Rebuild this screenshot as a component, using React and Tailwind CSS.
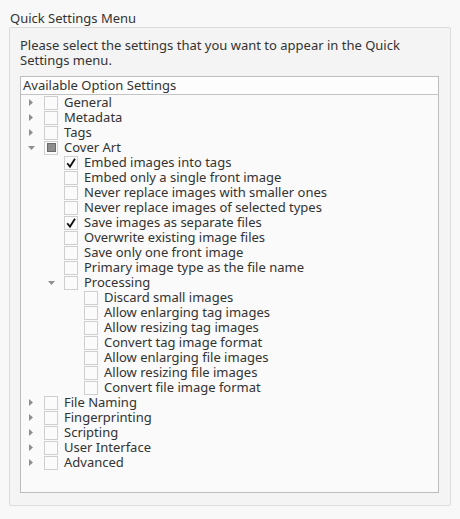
import React from "react";

const rows = [
  { l: 0, a: "r", c: 0, t: "General" },
  { l: 0, a: "r", c: 0, t: "Metadata" },
  { l: 0, a: "r", c: 0, t: "Tags" },
  { l: 0, a: "d", c: 2, t: "Cover Art" },
  { l: 1, a: "", c: 1, t: "Embed images into tags" },
  { l: 1, a: "", c: 0, t: "Embed only a single front image" },
  { l: 1, a: "", c: 0, t: "Never replace images with smaller ones" },
  { l: 1, a: "", c: 0, t: "Never replace images of selected types" },
  { l: 1, a: "", c: 1, t: "Save images as separate files" },
  { l: 1, a: "", c: 0, t: "Overwrite existing image files" },
  { l: 1, a: "", c: 0, t: "Save only one front image" },
  { l: 1, a: "", c: 0, t: "Primary image type as the file name" },
  { l: 1, a: "d", c: 0, t: "Processing" },
  { l: 2, a: "", c: 0, t: "Discard small images" },
  { l: 2, a: "", c: 0, t: "Allow enlarging tag images" },
  { l: 2, a: "", c: 0, t: "Allow resizing tag images" },
  { l: 2, a: "", c: 0, t: "Convert tag image format" },
  { l: 2, a: "", c: 0, t: "Allow enlarging file images" },
  { l: 2, a: "", c: 0, t: "Allow resizing file images" },
  { l: 2, a: "", c: 0, t: "Convert file image format" },
  { l: 0, a: "r", c: 0, t: "File Naming" },
  { l: 0, a: "r", c: 0, t: "Fingerprinting" },
  { l: 0, a: "r", c: 0, t: "Scripting" },
  { l: 0, a: "r", c: 0, t: "User Interface" },
  { l: 0, a: "r", c: 0, t: "Advanced" },
];

function Arrow({ a }) {
  if (a === "r")
    return (
      <svg width="20" height="15" viewBox="0 0 20 15">
        <polygon points="5,4 9,7.5 5,11" fill="#8f8f8f" />
      </svg>
    );
  if (a === "d")
    return (
      <svg width="20" height="15" viewBox="0 0 20 15">
        <polygon points="4,6 11,6 7.5,10" fill="#8f8f8f" />
      </svg>
    );
  return <div className="w-[20px] h-[15px]" />;
}

function Box({ c }) {
  return (
    <div className="w-[14px] h-[14px] border border-[#cfcfcf] bg-[#fbfbfb] flex items-center justify-center">
      {c === 2 && (
        <div className="w-[9px] h-[9px] bg-[#8c8c8c] border border-[#6a6a6a]" />
      )}
      {c === 1 && (
        <svg width="12" height="12" viewBox="0 0 12 12">
          <polyline
            points="2.2,6.2 5,9.6 10,1.8"
            fill="none"
            stroke="#111"
            strokeWidth="1.8"
          />
        </svg>
      )}
    </div>
  );
}

export default function App() {
  return (
    <div
      className="w-[460px] h-[519px] bg-[#f8f8f8] text-[#333333] text-[13px] leading-[15px] overflow-hidden"
      style={{ fontFamily: '"Noto Sans", sans-serif' }}
    >
      <div className="pl-[10px] pt-[11px] h-[27px]">Quick Settings Menu</div>
      <div className="ml-[9px] w-[442px] h-[479px] border border-[#dcdcdc] rounded-[2px] bg-[#f4f4f4] pl-[10px] pt-[10px]">
        <div>Please select the settings that you want to appear in the Quick</div>
        <div>Settings menu.</div>
        <div className="mt-[8px] w-[419px] h-[417px] border border-[#bdbdbd] bg-[#fafafa]">
          <div className="h-[18px] border-b border-[#c4c4c4] bg-[#fdfdfd] pl-[2px] pt-[1px]">
            Available Option Settings
          </div>
          <div>
            {rows.map((r, i) => (
              <div key={i} className="h-[15px] flex items-center">
                <div style={{ width: 3 + r.l * 20 }} className="shrink-0" />
                <Arrow a={r.a} />
                <Box c={r.c} />
                <div className="pl-[6px] whitespace-nowrap">{r.t}</div>
              </div>
            ))}
          </div>
        </div>
      </div>
    </div>
  );
}
